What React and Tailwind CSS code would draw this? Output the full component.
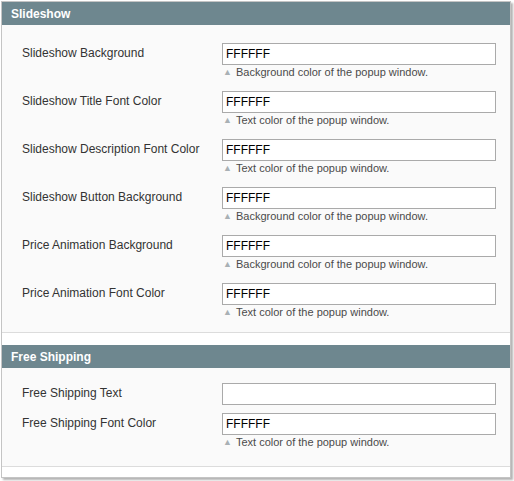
import React from 'react';

const slideshowFields = [
    { label: 'Slideshow Background', value: 'FFFFFF', hint: 'Background color of the popup window.' },
    { label: 'Slideshow Title Font Color', value: 'FFFFFF', hint: 'Text color of the popup window.' },
    { label: 'Slideshow Description Font Color', value: 'FFFFFF', hint: 'Text color of the popup window.' },
    { label: 'Slideshow Button Background', value: 'FFFFFF', hint: 'Background color of the popup window.' },
    { label: 'Price Animation Background', value: 'FFFFFF', hint: 'Background color of the popup window.' },
    { label: 'Price Animation Font Color', value: 'FFFFFF', hint: 'Text color of the popup window.' },
];

const shippingFields = [
    { label: 'Free Shipping Text', value: '' },
    { label: 'Free Shipping Font Color', value: 'FFFFFF', hint: 'Text color of the popup window.' },
];

const FieldRow = ({ label, value, hint }) => (
    <div className="flex py-[4px]">
        <div className="w-[220px] pl-[20px] pt-[1px] text-[12px] leading-[18px] text-[#333333]">{label}</div>
        <div className="w-[274px]">
            <input
                type="text"
                defaultValue={value}
                className="block w-full h-[22px] border border-[#aaaaaa] bg-white px-[3px] text-[12px] text-black outline-none"
            />
            {hint && (
                <div className="flex items-center h-[18px] pb-[3px] pl-[1px] text-[11px] text-[#4a4a4a]">
                    <span className="mr-[4px] text-[9px] text-[#a9b0b4]">▲</span>
                    {hint}
                </div>
            )}
        </div>
    </div>
);

const Section = ({ title, fields, className, bodyClass }) => (
    <div className={className}>
        <div className="h-[23px] bg-[#6e878f] pl-[9px] pt-[1px] text-[12px] font-bold leading-[22px] text-white">
            {title}
        </div>
        <div className={`bg-[#fafafa] border-b border-[#dcdcdc] ${bodyClass}`}>
            {fields.map(f => (
                <FieldRow key={f.label} {...f} />
            ))}
        </div>
    </div>
);

export default function App() {
    return (
        <div className="w-[514px] h-[481px] bg-white pt-[1px] pl-[1px]" style={{ fontFamily: '"Liberation Sans", Arial, sans-serif' }}>
            <div className="w-[510px] h-[477px] border border-[#c4c4c4] bg-white shadow-[2px_2px_2px_rgba(0,0,0,0.3)]">
                <Section title="Slideshow" fields={slideshowFields} bodyClass="pt-[14px] pb-[5px]" />
                <Section title="Free Shipping" fields={shippingFields} className="mt-[12px]" bodyClass="pt-[11px] pb-[9px]" />
            </div>
        </div>
    );
}
